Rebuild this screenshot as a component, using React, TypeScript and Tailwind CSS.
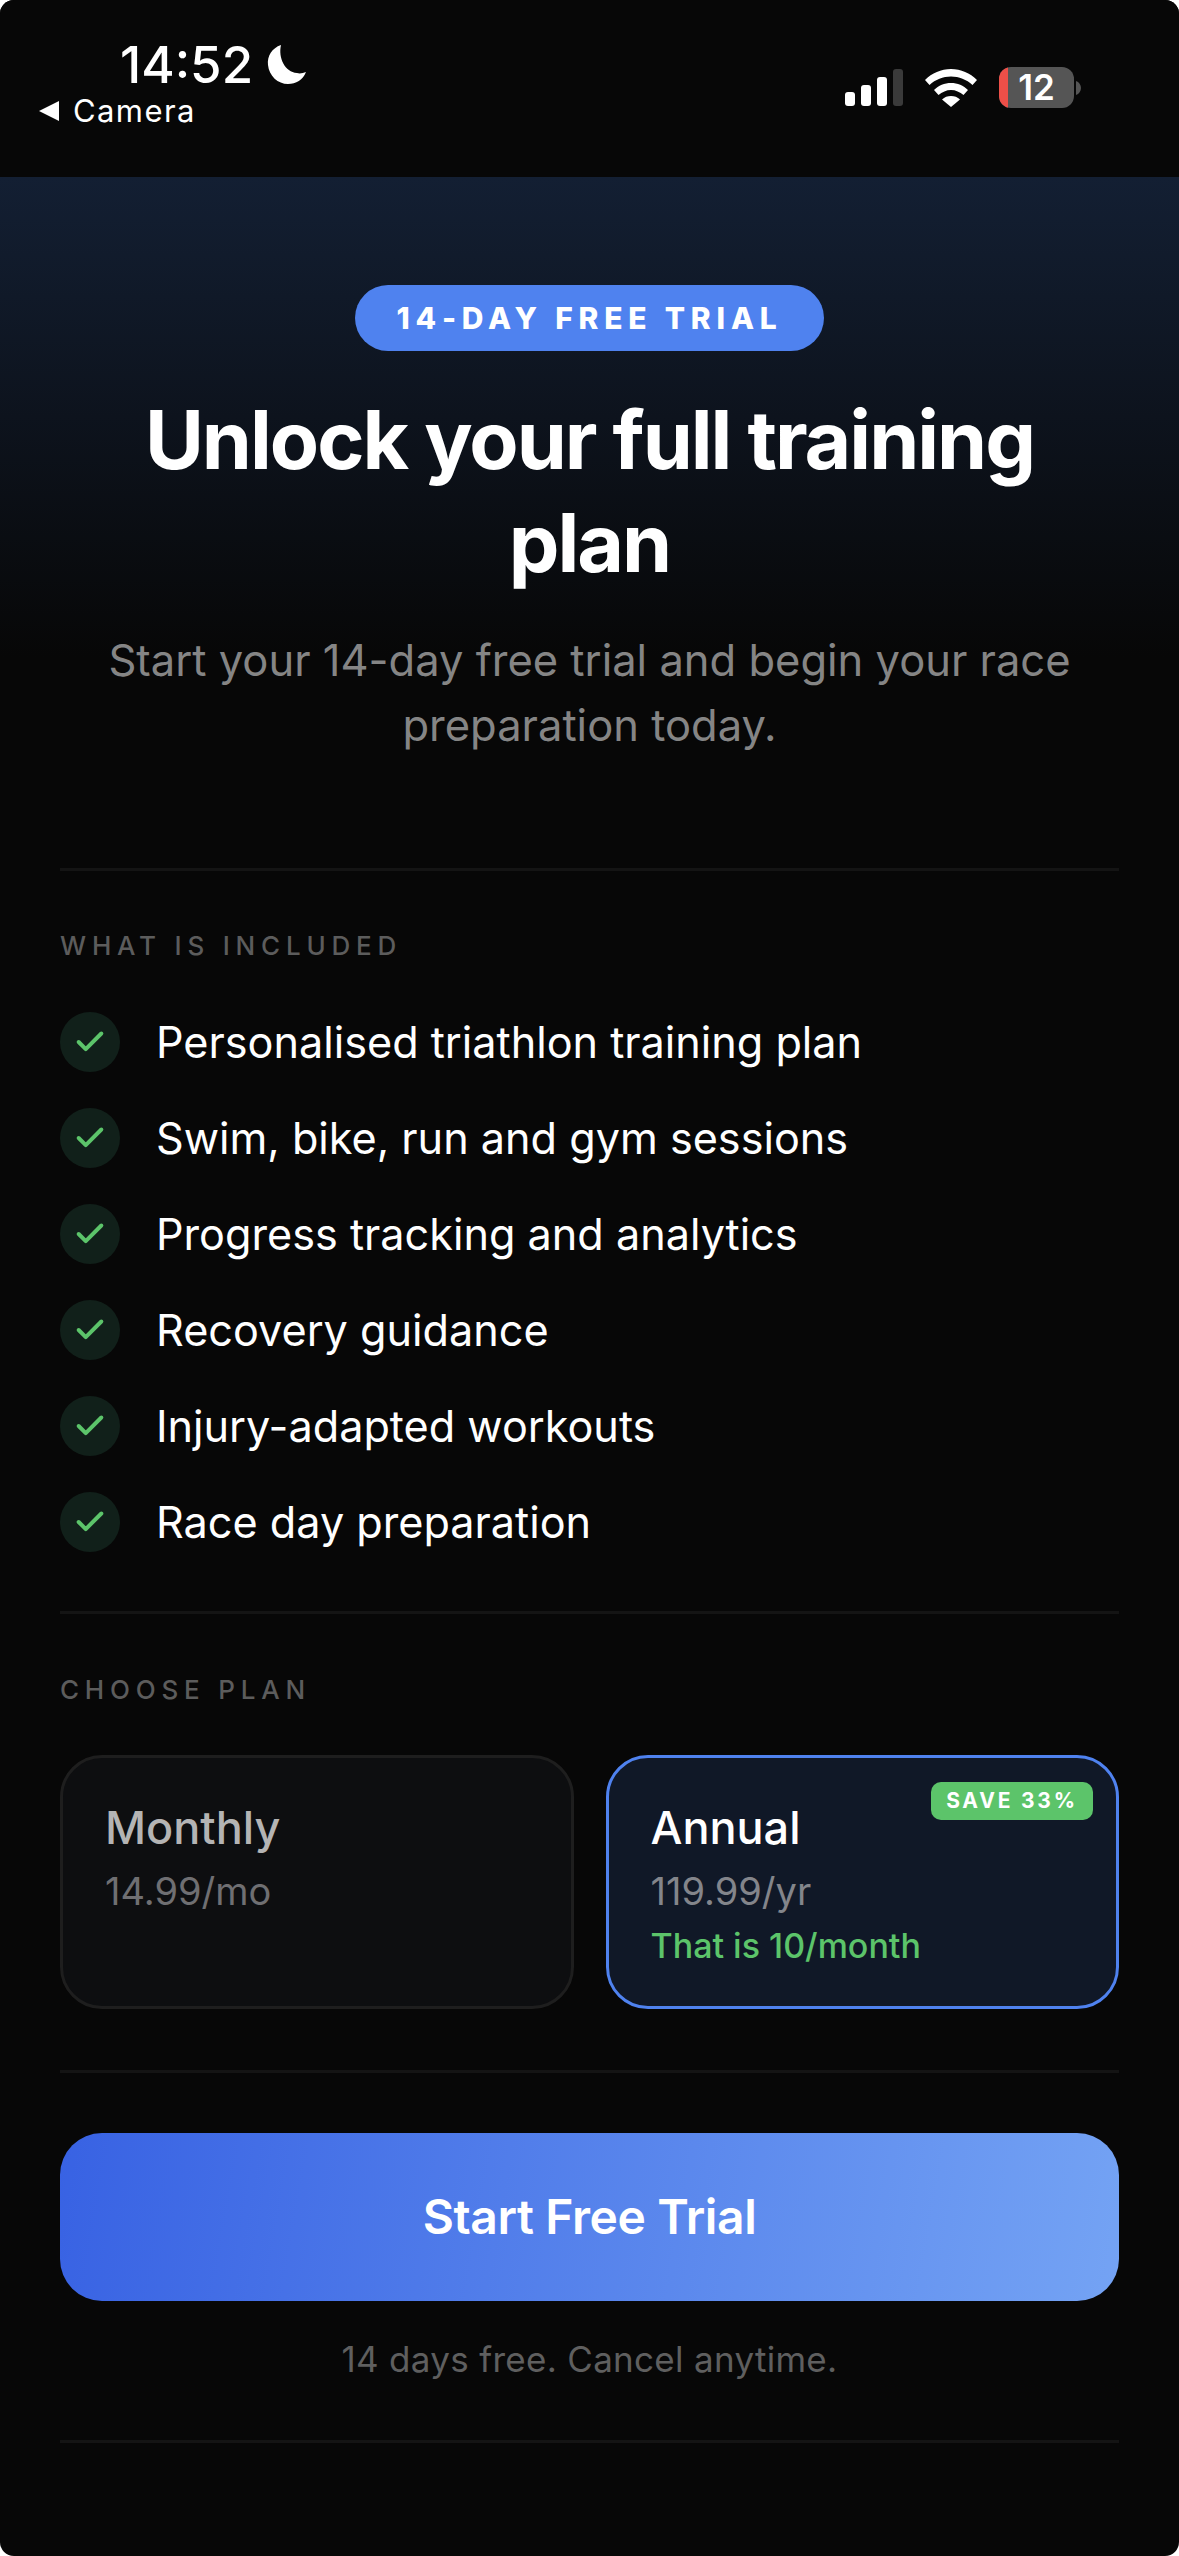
import { Check } from "lucide-react";

const features = [
  "Personalised triathlon training plan",
  "Swim, bike, run and gym sessions",
  "Progress tracking and analytics",
  "Recovery guidance",
  "Injury-adapted workouts",
  "Race day preparation",
];

function Divider() {
  return <div className="h-[3px] bg-[#141414]" />;
}

function StatusBar() {
  return (
    <div className="flex h-[177px] items-start justify-between bg-[#070707] pl-[38px] pr-[98px] text-white">
      <div className="flex flex-col">
        <div className="ml-[82px] mt-[36px] flex items-center gap-[13px]">
          <span className="text-[51px] font-medium leading-[58px]">14:52</span>
          <svg width="42" height="42" viewBox="0 0 42 42" fill="white">
            <path d="M15 1C6 4 1 12 2 21c1 11 10 19 20 19 8 0 15-4 18-12-3 1-6 2-9 1C19 28 12 14 15 1Z" />
          </svg>
        </div>
        <div className="-mt-[3px] flex items-center gap-[13px]">
          <svg width="22" height="22" viewBox="0 0 22 22" fill="white">
            <path d="M21 1v20L1 11Z" />
          </svg>
          <span className="text-[31px] font-normal leading-[40px] tracking-[1.4px]">Camera</span>
        </div>
      </div>
      <div className="mt-[67px] flex items-center">
        <div className="flex items-end gap-[6px]">
          <div className="h-[14px] w-[10px] rounded-[3px] bg-white" />
          <div className="h-[21px] w-[10px] rounded-[3px] bg-white" />
          <div className="h-[29px] w-[10px] rounded-[3px] bg-white" />
          <div className="h-[37px] w-[10px] rounded-[3px] bg-[#3a3a3a]" />
        </div>
        <svg width="52" height="38" viewBox="0 0 52 38" fill="white" className="ml-[22px]">
          <path d="M26 0c10 0 19 4 26 11l-4.500 5C41.500 10.500 34 7.500 26 7.500S10.500 10.500 4.500 16L0 11C7 4 16 0 26 0Z" />
          <path d="M26 14c6.500 0 12.500 2.500 17 7l-4.500 5c-3.500-3-8-5-12.500-5s-9 2-12.500 5L9 21c4.500-4.500 10.500-7 17-7Z" />
          <path d="M26 27c3.500 0 6.500 1 9 3.500L26 38l-9-7.500C19.500 28 22.500 27 26 27Z" />
        </svg>
        <div className="ml-[22px] flex items-center">
          <div className="relative flex h-[41px] w-[75px] items-center justify-center overflow-hidden rounded-[12px] bg-[#555555]">
            <div className="absolute inset-y-0 left-0 w-[9px] bg-[#ed4f48]" />
            <span className="text-[35px] font-semibold leading-none">12</span>
          </div>
          <svg width="5" height="14" viewBox="0 0 5 14" fill="#555555" className="ml-[2px]">
            <path d="M0 0c3 1 5 4 5 7s-2 6-5 7Z" />
          </svg>
        </div>
      </div>
    </div>
  );
}

export default function App() {
  return (
    <div className="h-[2556px] w-[1179px] overflow-hidden rounded-[14px] bg-[#070707] font-['Inter',sans-serif]">
      <StatusBar />
      <div className="bg-[linear-gradient(to_bottom,#131f33_0px,#070707_480px)] px-[60px]">
        <section className="flex h-[691px] flex-col items-center pt-[108px]">
          <div className="flex h-[66px] w-[469px] items-center justify-center rounded-full bg-[#4f82ef] text-[30px] font-extrabold tracking-[5.8px] text-white">
            14-DAY FREE TRIAL
          </div>
          <h1 className="mt-[37px] text-center text-[80.500px] font-bold leading-[103px] tracking-[-2px] text-white">
            Unlock your full training plan
          </h1>
          <p className="mt-[34px] text-center text-[43.500px] leading-[65px] text-[#858585]">
            Start your 14-day free trial and begin your race preparation today.
          </p>
        </section>
        <Divider />
      </div>

      <main className="px-[60px]">
        <section className="h-[740px] pt-[59px]">
          <h2 className="text-[26px] font-medium leading-[32px] tracking-[5.8px] text-[#5c5c5c]">WHAT IS INCLUDED</h2>
          <ul className="mt-[50px] flex flex-col gap-[36px]">
            {features.map((f) => (
              <li key={f} className="flex h-[60px] items-center gap-[36px]">
                <span className="flex h-[60px] w-[60px] items-center justify-center rounded-full bg-[#11201a]">
                  <Check size={34} strokeWidth={2.8} className="text-[#5cc46a]" />
                </span>
                <span className="-mt-[1px] text-[43.200px] leading-[60px] text-white">{f}</span>
              </li>
            ))}
          </ul>
        </section>
        <Divider />

        <section className="pt-[60px]">
          <h2 className="text-[26px] font-medium leading-[32px] tracking-[5.8px] text-[#5c5c5c]">CHOOSE PLAN</h2>
          <div className="mt-[49px] grid grid-cols-2 gap-[32px]">
            <div className="h-[254px] rounded-[42px] border-[3px] border-[#1e1e1e] bg-[#0d0e10] px-[42px] pt-[42px]">
              <div className="text-[45px] font-medium leading-[56px] text-[#b4b4b4]">Monthly</div>
              <div className="mt-[10px] text-[38px] leading-[50px] text-[#6f6f72]">14.99/mo</div>
            </div>
            <div className="relative h-[254px] rounded-[42px] border-[3px] border-[#4f82ef] bg-[#101827] px-[42px] pt-[42px]">
              <span className="absolute right-[23px] top-[24px] flex h-[38px] w-[162px] items-center justify-center rounded-[10px] bg-[#5cc46a] text-[21px] font-bold tracking-[2.8px] text-white">
                SAVE 33%
              </span>
              <div className="text-[45px] font-medium leading-[56px] text-white">Annual</div>
              <div className="mt-[10px] text-[38px] leading-[50px] text-[#83858b]">119.99/yr</div>
              <div className="mt-[8px] text-[34px] font-medium leading-[44px] text-[#5cc46a]">That is 10/month</div>
            </div>
          </div>
        </section>

        <div className="mt-[61px]">
          <Divider />
        </div>

        <button className="mt-[60px] flex h-[168px] w-full items-center justify-center rounded-[42px] bg-[linear-gradient(100deg,#3862e3,#74a3f4)] text-[48px] font-semibold tracking-[-0.4px] text-white">
          Start Free Trial
        </button>
        <p className="mt-[35px] text-center text-[35px] leading-[46px] tracking-[0.3px] text-[#5f5f5f]">
          14 days free. Cancel anytime.
        </p>
        <div className="mt-[58px]">
          <Divider />
        </div>
      </main>
    </div>
  );
}
